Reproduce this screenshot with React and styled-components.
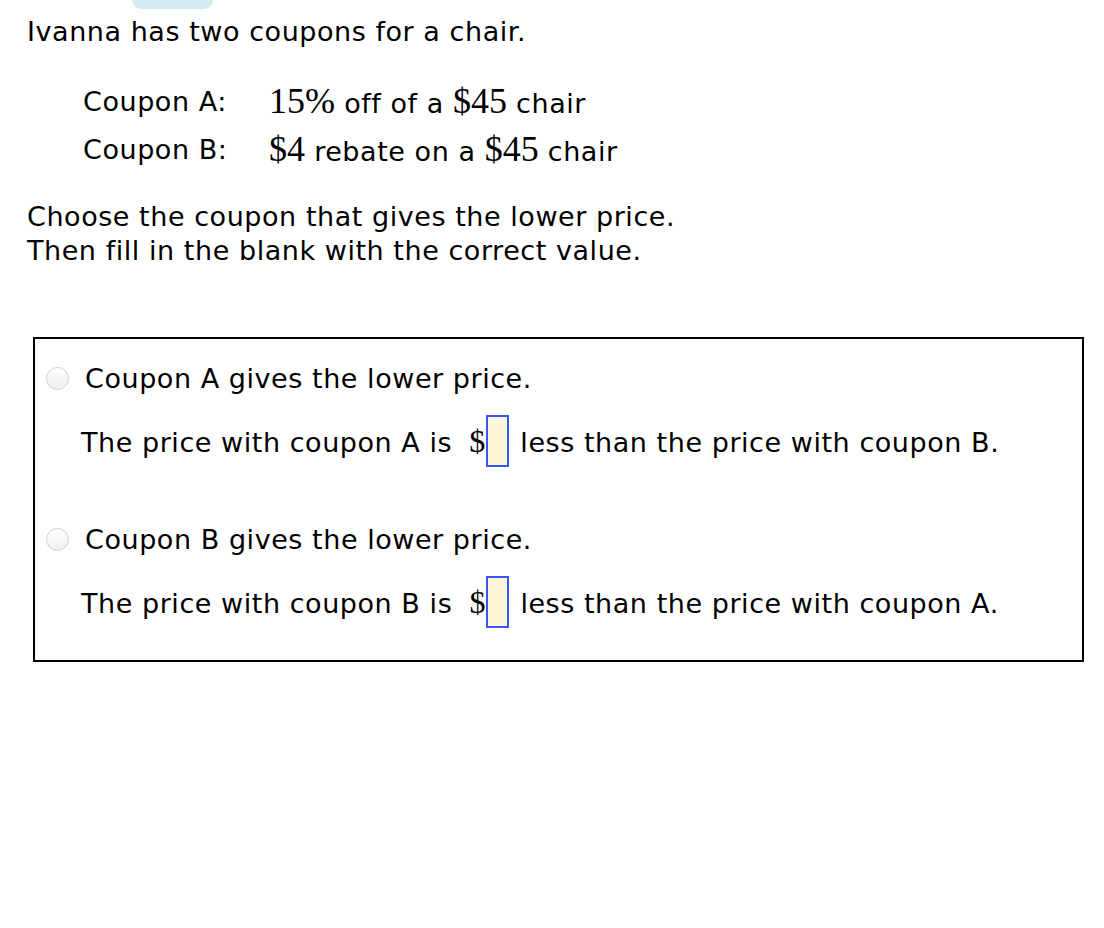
import React from 'react';
import styled, {createGlobalStyle} from 'styled-components';

const GlobalStyle = createGlobalStyle`
  body {
    margin: 0;
    background: #ffffff;
    font-family: "DejaVu Sans", Verdana, sans-serif;
    color: #000000;
  }
`;

const Page = styled.div`
  width: 1104px;
  min-height: 928px;
  font-size: 27px;
  letter-spacing: 0.55px;
`;

const Tab = styled.div`
  margin-left: 132px;
  width: 81px;
  height: 9px;
  background: #d3ecf1;
  border-radius: 0 0 12px 12px;
`;

const Intro = styled.p`
  margin: 6px 0 0 27px;
  line-height: 34px;
`;

const CouponTable = styled.div`
  margin: 28px 0 0 83px;
  display: grid;
  grid-template-columns: 186px auto;
  grid-auto-rows: 48px;
  align-items: center;
`;

const Math = styled.span`
  font-family: "Liberation Serif", "Times New Roman", serif;
  font-size: ${(p) => p.size || 36}px;
  letter-spacing: 0;
  line-height: 1;
  margin-left: ${(p) => p.lead || 0}px;
`;

const Instructions = styled.p`
  margin: 27px 0 0 27px;
  line-height: 34px;
`;

const AnswerBox = styled.div`
  margin: 69px 0 0 33px;
  width: 1051px;
  height: 325px;
  box-sizing: border-box;
  border: 2px solid #000000;
  padding-top: 19px;
`;

const Option = styled.label`
  display: flex;
  align-items: center;
  height: 40px;
  padding-left: 11px;
  margin-top: ${(p) => p.gap || 0}px;
`;

const Radio = styled.span`
  width: 23px;
  height: 23px;
  box-sizing: border-box;
  border-radius: 50%;
  border: 1px solid #cfcfcf;
  background: linear-gradient(#ffffff, #efefef);
  margin-right: 16px;
  flex-shrink: 0;
`;

const Statement = styled.div`
  display: flex;
  align-items: center;
  height: 52px;
  padding-left: 46px;
  margin-top: 17px;
  white-space: pre;
`;

const Words = styled.span`
  padding-top: 3px;
`;

const Blank = styled.span`
  display: inline-block;
  width: 23px;
  height: 52px;
  box-sizing: border-box;
  border: 2px solid #3a55f5;
  background: #fdf6d8;
  margin: 0 11px 0 1px;
`;

const options = [
  {letter: 'A', other: 'B', gap: 0},
  {letter: 'B', other: 'A', gap: 52},
];

function App() {
  return (
    <Page>
      <GlobalStyle />
      <Tab />
      <Intro>Ivanna has two coupons for a chair.</Intro>

      <CouponTable>
        <span>Coupon A:</span>
        <span><Math>15%</Math> off of a <Math>$45</Math> chair</span>
        <span>Coupon B:</span>
        <span><Math>$4</Math> rebate on a <Math>$45</Math> chair</span>
      </CouponTable>

      <Instructions>
        Choose the coupon that gives the lower price.
        <br />
        Then fill in the blank with the correct value.
      </Instructions>

      <AnswerBox>
        {options.map((o) => (
          <React.Fragment key={o.letter}>
            <Option gap={o.gap}>
              <Radio />
              Coupon {o.letter} gives the lower price.
            </Option>
            <Statement>
              <Words>{`The price with coupon ${o.letter} is `}</Words>
              <Math size={32} lead={8}>$</Math>
              <Blank />
              <Words>{`less than the price with coupon ${o.other}.`}</Words>
            </Statement>
          </React.Fragment>
        ))}
      </AnswerBox>
    </Page>
  );
}

export default App;
